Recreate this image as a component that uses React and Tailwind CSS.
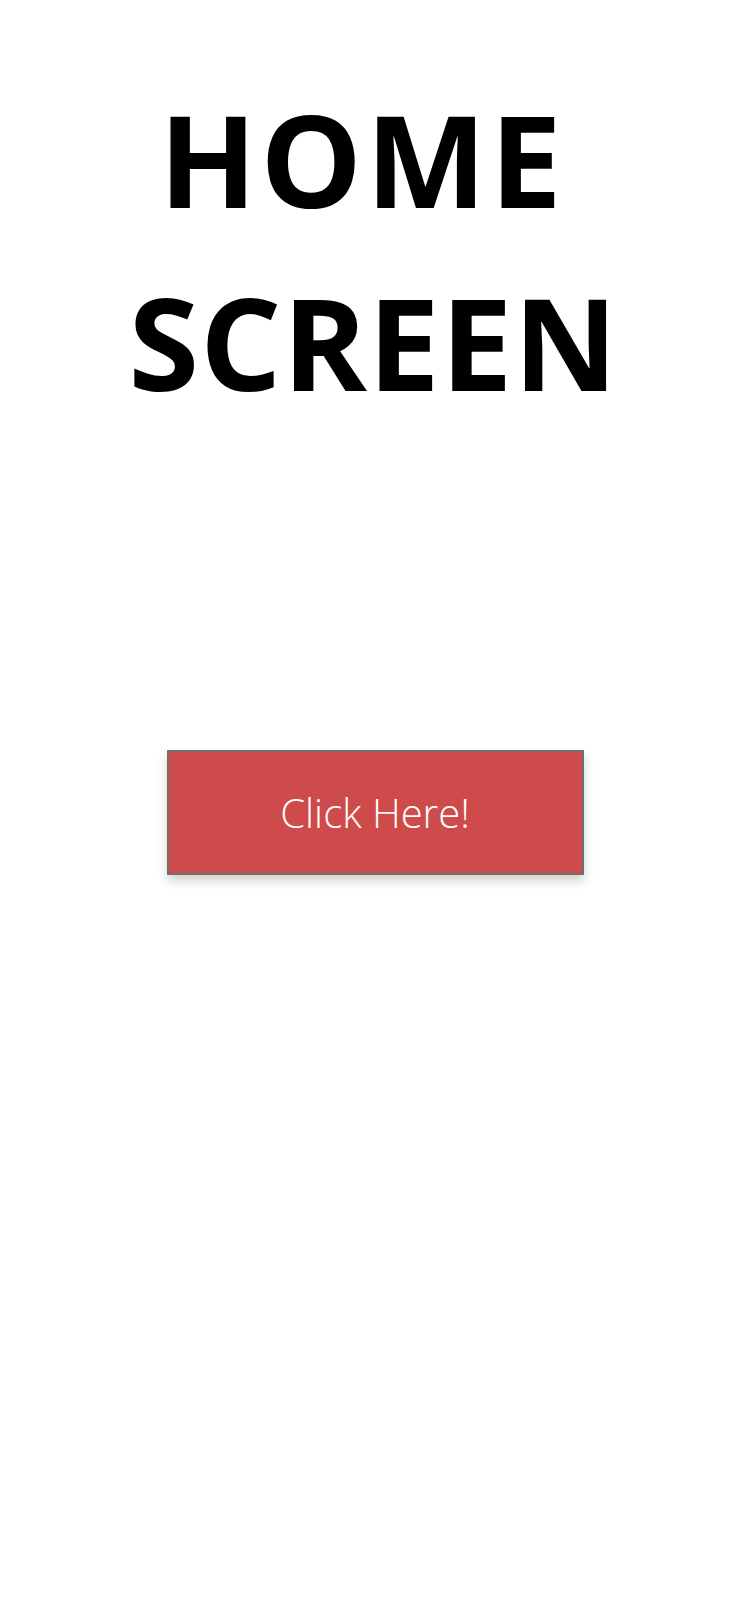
export default function App() {
  return (
    <div className="min-h-[1624px] w-full bg-white flex flex-col items-center font-['Open_Sans',sans-serif]">
      <h1 className="mt-[67px] w-full text-center text-black font-bold text-[128px] leading-[183px]">
        <span className="block pr-[26px] tracking-[3.5px]">HOME</span>
        <span className="block pr-[3px] tracking-[1px]">SCREEN</span>
      </h1>
      <button className="mt-[317px] w-[417px] h-[125px] bg-[#cf4a4a] border-2 border-[#6e6e6e] shadow-[0_6px_10px_rgba(0,0,0,0.18)] text-white text-[40px] font-light">
        Click Here!
      </button>
    </div>
  )
}
